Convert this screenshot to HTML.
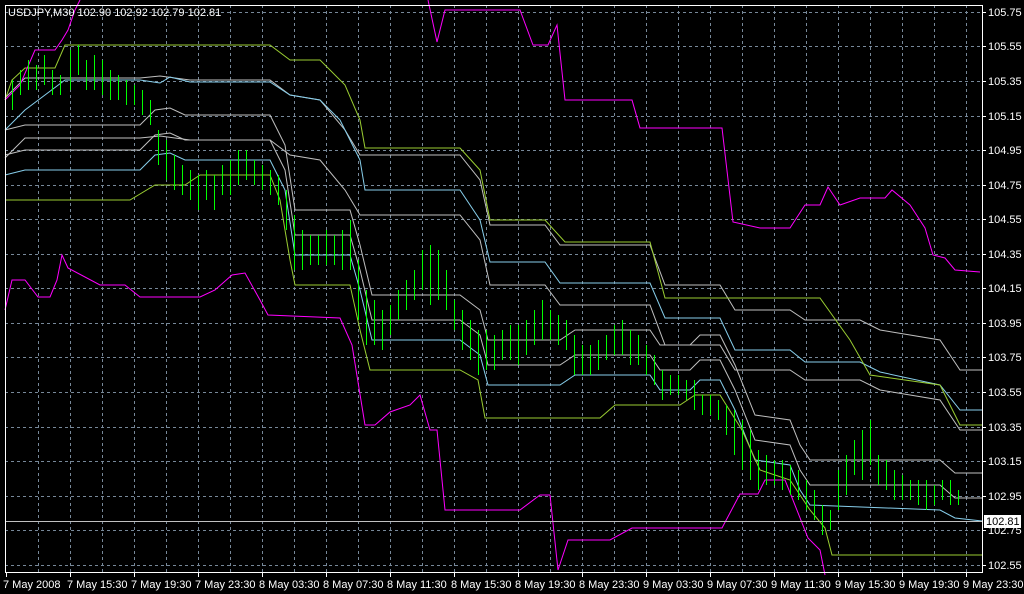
<!DOCTYPE html><html><head><style>
body{margin:0;background:#000;width:1024px;height:594px;overflow:hidden}
svg{display:block}
text{font-family:"Liberation Sans",sans-serif;font-size:11px;fill:#fff}
</style></head><body>
<svg width="1024" height="594" viewBox="0 0 1024 594" xmlns="http://www.w3.org/2000/svg">
<g stroke="#778899" stroke-dasharray="3,3" stroke-width="1">
<line x1="5" x2="982" y1="12.5" y2="12.5"/><line x1="5" x2="982" y1="46.5" y2="46.5"/><line x1="5" x2="982" y1="81.5" y2="81.5"/><line x1="5" x2="982" y1="116.5" y2="116.5"/><line x1="5" x2="982" y1="150.5" y2="150.5"/><line x1="5" x2="982" y1="185.5" y2="185.5"/><line x1="5" x2="982" y1="219.5" y2="219.5"/><line x1="5" x2="982" y1="254.5" y2="254.5"/><line x1="5" x2="982" y1="288.5" y2="288.5"/><line x1="5" x2="982" y1="323.5" y2="323.5"/><line x1="5" x2="982" y1="357.5" y2="357.5"/><line x1="5" x2="982" y1="392.5" y2="392.5"/><line x1="5" x2="982" y1="427.5" y2="427.5"/><line x1="5" x2="982" y1="461.5" y2="461.5"/><line x1="5" x2="982" y1="496.5" y2="496.5"/><line x1="5" x2="982" y1="530.5" y2="530.5"/><line x1="5" x2="982" y1="565.5" y2="565.5"/>
<line y1="5" y2="572" x1="38.5" x2="38.5"/><line y1="5" y2="572" x1="70.5" x2="70.5"/><line y1="5" y2="572" x1="102.5" x2="102.5"/><line y1="5" y2="572" x1="134.5" x2="134.5"/><line y1="5" y2="572" x1="166.5" x2="166.5"/><line y1="5" y2="572" x1="198.5" x2="198.5"/><line y1="5" y2="572" x1="230.5" x2="230.5"/><line y1="5" y2="572" x1="262.5" x2="262.5"/><line y1="5" y2="572" x1="294.5" x2="294.5"/><line y1="5" y2="572" x1="326.5" x2="326.5"/><line y1="5" y2="572" x1="358.5" x2="358.5"/><line y1="5" y2="572" x1="390.5" x2="390.5"/><line y1="5" y2="572" x1="422.5" x2="422.5"/><line y1="5" y2="572" x1="454.5" x2="454.5"/><line y1="5" y2="572" x1="486.5" x2="486.5"/><line y1="5" y2="572" x1="518.5" x2="518.5"/><line y1="5" y2="572" x1="550.5" x2="550.5"/><line y1="5" y2="572" x1="582.5" x2="582.5"/><line y1="5" y2="572" x1="614.5" x2="614.5"/><line y1="5" y2="572" x1="646.5" x2="646.5"/><line y1="5" y2="572" x1="678.5" x2="678.5"/><line y1="5" y2="572" x1="710.5" x2="710.5"/><line y1="5" y2="572" x1="742.5" x2="742.5"/><line y1="5" y2="572" x1="774.5" x2="774.5"/><line y1="5" y2="572" x1="806.5" x2="806.5"/><line y1="5" y2="572" x1="838.5" x2="838.5"/><line y1="5" y2="572" x1="870.5" x2="870.5"/><line y1="5" y2="572" x1="902.5" x2="902.5"/><line y1="5" y2="572" x1="934.5" x2="934.5"/><line y1="5" y2="572" x1="966.5" x2="966.5"/>
</g>
<g fill="none" stroke-width="1">
<g stroke="#c0c0c0">
<polyline points="5,118 25,98 65,98 140,98 160,96 190,100 270,100 290,115 320,120 345,150 360,175 460,175 480,200 490,245 545,245 560,265 650,265 665,305 720,305 735,330 790,330 805,340 860,340 880,350 940,360 960,390 982,390" transform="translate(0,-20)"/>
<polyline points="5,118 25,98 65,98 140,98 160,96 190,100 270,100 290,115 320,120 345,150 360,175 460,175 480,200 490,245 545,245 560,265 650,265 665,305 720,305 735,330 790,330 805,340 860,340 880,350 940,360 960,390 982,390" transform="translate(0,40)"/>
<polyline points="5,175 25,170 140,170 155,155 170,153 185,160 270,160 285,190 295,255 350,255 360,290 372,340 460,340 480,355 488,385 560,385 575,375 650,375 660,390 690,390 700,380 720,380 735,410 755,460 790,465 800,490 810,505 940,505 955,518 982,518" transform="translate(0,-20)"/>
<polyline points="5,175 25,170 140,170 155,155 170,153 185,160 270,160 285,190 295,255 350,255 360,290 372,340 460,340 480,355 488,385 560,385 575,375 650,375 660,390 690,390 700,380 720,380 735,410 755,460 790,465 800,490 810,505 940,505 955,518 982,518" transform="translate(0,-45)"/>
</g>
<polyline stroke="#87ceeb" points="5,130 25,110 65,80 140,80 160,83 170,77 190,82 270,82 290,95 320,100 340,120 360,160 365,190 460,190 480,220 490,262 545,262 560,283 650,283 665,318 720,318 735,350 790,350 805,362 860,362 880,372 940,385 960,410 982,410"/>
<polyline stroke="#87ceeb" points="5,175 25,170 140,170 155,155 170,153 185,160 270,160 285,190 295,255 350,255 360,290 372,340 460,340 480,355 488,385 560,385 575,375 650,375 660,390 690,390 700,380 720,380 735,410 755,460 790,465 800,490 810,505 940,510 955,518 982,521"/>
<polyline stroke="#9acd32" points="5,100 12,80 25,68 55,68 65,45 270,45 290,60 320,60 345,85 360,120 365,148 460,148 480,170 490,220 545,220 565,242 650,242 665,298 820,298 850,340 870,375 940,385 960,425 982,425"/>
<polyline stroke="#9acd32" points="5,200 130,200 155,185 185,185 200,175 270,175 280,200 290,260 295,285 350,285 360,330 370,370 460,370 478,380 485,418 600,418 615,405 680,405 695,395 720,395 742,430 760,470 790,480 810,510 825,528 832,555 982,555"/>
<polyline stroke="#ff00ff" points="5,100 20,85 35,50 55,50 62,40 68,30 75,10 80,0"/>
<polyline stroke="#ff00ff" points="428,0 437,42 445,10 520,10 533,45 548,45 557,25 565,100 632,100 640,128 722,128 733,222 760,228 790,228 805,205 820,205 828,187 840,205 860,198 885,198 892,190 910,205 925,228 933,255 945,258 955,270 980,272"/>
<polyline stroke="#ff00ff" points="5,310 12,280 25,280 38,297 50,297 57,280 62,255 68,268 100,285 125,285 140,297 200,297 215,290 232,275 245,273 260,300 268,315 340,318 352,345 365,425 375,425 390,412 410,405 420,395 430,430 437,430 445,510 520,510 540,495 550,495 558,570 568,540 610,540 632,528 722,528 740,494 758,494 765,480 785,480 808,538 820,550 825,575"/>
<line stroke="#c0c0c0" x1="5" x2="982" y1="521.5" y2="521.5"/>
</g>
<g stroke="#00ff00" stroke-width="1" transform="translate(0.5,0)">
<path d="M12 80v30M20 70v25M28 60v30M36 65v25M44 55v30M52 70v25M60 75v20M70 50v40M78 45v30M86 60v30M94 55v35M102 60v35M110 70v30M118 75v25M126 80v25M134 85v20M142 90v25M150 100v25M158 130v35M166 140v40M174 155v35M182 165v30M190 170v30M198 175v35M206 170v30M214 175v35M222 165v30M230 160v35M238 150v35M246 150v30M254 160v25M262 165v25M270 170v25M278 175v30M286 190v40M294 215v55M302 230v40M310 235v30M318 235v30M326 230v35M334 235v30M342 230v40M350 220v50M358 260v60M366 290v55M374 300v45M382 310v40M390 305v30M398 290v30M406 280v30M414 270v30M422 250v40M430 245v60M438 250v50M446 270v40M454 300v30M462 310v40M470 320v40M478 330v45M486 330v40M494 335v35M502 330v30M510 325v35M518 325v40M526 320v35M534 310v35M542 300v40M550 310v30M558 315v30M566 320v30M574 335v40M582 345v30M590 345v30M598 340v30M606 335v25M614 325v30M622 320v35M630 330v35M638 335v30M646 345v30M654 355v30M662 370v30M670 375v20M678 375v20M686 380v20M694 380v30M702 395v20M710 395v20M718 400v20M726 405v30M734 410v45M742 420v50M750 430v50M758 450v40M766 455v30M774 460v25M782 460v30M790 465v30M798 470v30M806 480v30M814 490v30M822 505v30M830 510v20M838 470v40M846 455v40M854 440v35M862 430v50M870 420v45M878 455v30M886 460v30M894 470v30M902 475v25M910 480v20M918 480v25M926 480v30M934 485v20M942 480v20M950 480v25M958 490v15"/>
</g>
<rect x="5.5" y="5.5" width="977" height="567" fill="none" stroke="#fff"/>
<text x="8" y="16">USDJPY,M30  102.90 102.92 102.79 102.81</text>
<g stroke="#fff"><path d="M982 12.5h4M982 46.5h4M982 81.5h4M982 116.5h4M982 150.5h4M982 185.5h4M982 219.5h4M982 254.5h4M982 288.5h4M982 323.5h4M982 357.5h4M982 392.5h4M982 427.5h4M982 461.5h4M982 496.5h4M982 530.5h4M982 565.5h4"/>
<path d="M6.5 572v5M70.5 572v5M134.5 572v5M198.5 572v5M262.5 572v5M326.5 572v5M390.5 572v5M454.5 572v5M518.5 572v5M582.5 572v5M646.5 572v5M710.5 572v5M774.5 572v5M838.5 572v5M902.5 572v5M966.5 572v5"/></g>
<g><text x="988" y="16">105.75</text><text x="988" y="50">105.55</text><text x="988" y="85">105.35</text><text x="988" y="120">105.15</text><text x="988" y="154">104.95</text><text x="988" y="189">104.75</text><text x="988" y="223">104.55</text><text x="988" y="258">104.35</text><text x="988" y="292">104.15</text><text x="988" y="327">103.95</text><text x="988" y="361">103.75</text><text x="988" y="396">103.55</text><text x="988" y="431">103.35</text><text x="988" y="465">103.15</text><text x="988" y="500">102.95</text><text x="988" y="534">102.75</text><text x="988" y="569">102.55</text></g>
<rect x="984" y="515" width="37" height="13" fill="#fff"/>
<text x="986" y="525" style="fill:#000">102.81</text>
<g><text x="3" y="588">7 May 2008</text><text x="67" y="588">7 May 15:30</text><text x="131" y="588">7 May 19:30</text><text x="195" y="588">7 May 23:30</text><text x="259" y="588">8 May 03:30</text><text x="323" y="588">8 May 07:30</text><text x="387" y="588">8 May 11:30</text><text x="451" y="588">8 May 15:30</text><text x="515" y="588">8 May 19:30</text><text x="579" y="588">8 May 23:30</text><text x="643" y="588">9 May 03:30</text><text x="707" y="588">9 May 07:30</text><text x="771" y="588">9 May 11:30</text><text x="835" y="588">9 May 15:30</text><text x="899" y="588">9 May 19:30</text><text x="963" y="588">9 May 23:30</text></g>
</svg>
</body></html>
